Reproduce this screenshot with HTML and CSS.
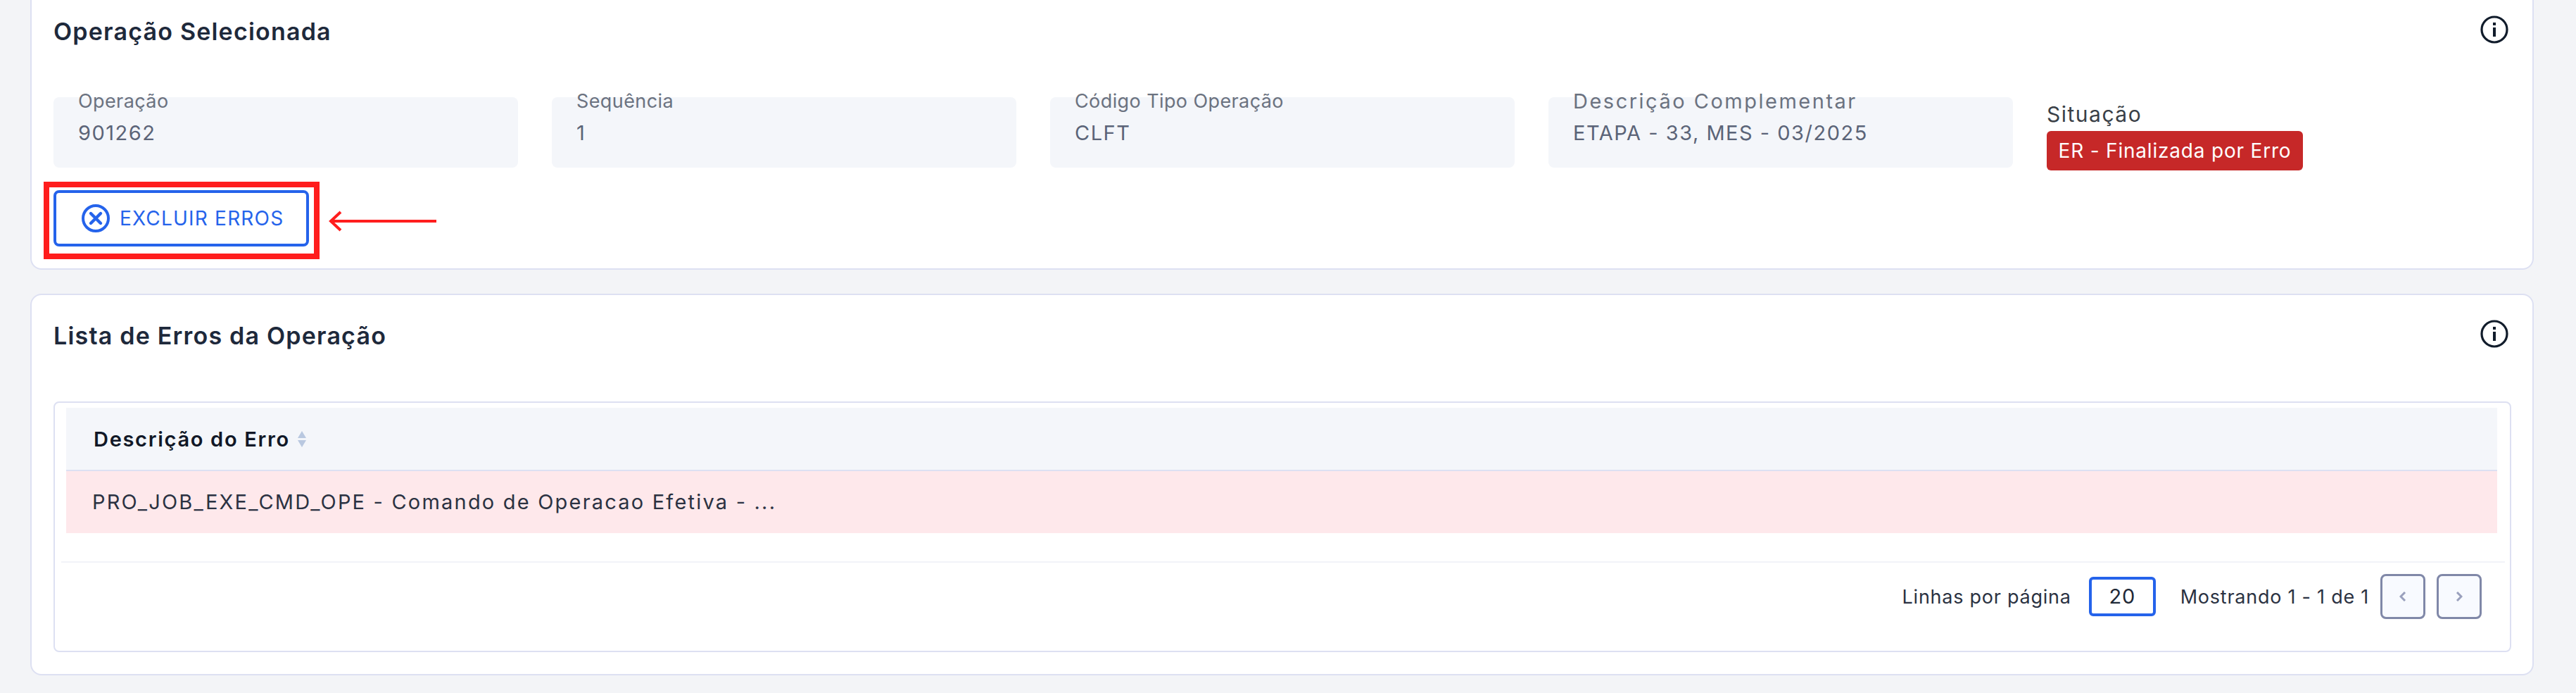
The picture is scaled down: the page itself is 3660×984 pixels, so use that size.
FILE: index.html
```html
<!DOCTYPE html>
<html>
<head>
    <title>Operação Selecionada</title>
    <link rel="stylesheet" href="styles.css">
</head>
<body>
    <div class="page">
        <section class="card">
            <div class="card-head">
                <h2 class="card-title">Operação Selecionada</h2>
                <svg class="info-icon" viewBox="0 0 40 40">
                    <circle cx="20" cy="20" r="18" fill="none" stroke="#111c2b" stroke-width="3.2"/>
                    <rect x="18" y="10" width="4" height="4" fill="#111c2b"/>
                    <rect x="18" y="17" width="4" height="13" fill="#111c2b"/>
                </svg>
            </div>

            <div class="fields">
                <div class="field">
                    <span class="field-label">Operação</span>
                    <span class="field-value">901262</span>
                </div>
                <div class="field">
                    <span class="field-label">Sequência</span>
                    <span class="field-value">1</span>
                </div>
                <div class="field">
                    <span class="field-label">Código Tipo Operação</span>
                    <span class="field-value">CLFT</span>
                </div>
                <div class="field">
                    <span class="field-label label-wide">Descrição Complementar</span>
                    <span class="field-value">ETAPA - 33, MES - 03/2025</span>
                </div>
                <div class="status">
                    <span class="status-label">Situação</span>
                    <span class="badge">ER - Finalizada por Erro</span>
                </div>
            </div>

            <div class="actions">
                <button class="btn-outline">
                    <svg class="btn-icon" viewBox="0 0 40 40">
                        <circle cx="20" cy="20" r="18" fill="none" stroke="currentColor" stroke-width="4"/>
                        <path d="M13 13 L27 27 M27 13 L13 27" fill="none" stroke="currentColor" stroke-width="4.4" stroke-linecap="round"/>
                    </svg>
                    EXCLUIR ERROS
                </button>
                <div class="mark-box"></div>
                <svg class="mark-arrow" viewBox="0 0 156 32">
                    <path d="M154 16 H4 M18 3 L4 16 L18 29" fill="none" stroke="#ff1d1d" stroke-width="4"/>
                </svg>
            </div>
        </section>

        <section class="card">
            <div class="card-head">
                <h2 class="card-title">Lista de Erros da Operação</h2>
                <svg class="info-icon" viewBox="0 0 40 40">
                    <circle cx="20" cy="20" r="18" fill="none" stroke="#111c2b" stroke-width="3.2"/>
                    <rect x="18" y="10" width="4" height="4" fill="#111c2b"/>
                    <rect x="18" y="17" width="4" height="13" fill="#111c2b"/>
                </svg>
            </div>

            <div class="table-box">
                <div class="table-head">
                    Descrição do Erro
                    <svg class="sort-icon" viewBox="0 0 12 23">
                        <path d="M6 0 L12 10 H0 Z M0 13 H12 L6 23 Z" fill="#b9c8e0"/>
                    </svg>
                </div>
                <div class="table-row">PRO_JOB_EXE_CMD_OPE - Comando de Operacao Efetiva - ...</div>

                <div class="table-foot">
                    <span>Linhas por página</span>
                    <span class="page-size">20</span>
                    <span class="page-info">Mostrando 1 - 1 de 1</span>
                    <button class="page-btn">
                        <svg class="chevron" viewBox="0 0 10 14"><path d="M8 1 L2 7 L8 13" fill="none" stroke="#9aa0bd" stroke-width="3"/></svg>
                    </button>
                    <button class="page-btn">
                        <svg class="chevron" viewBox="0 0 10 14"><path d="M2 1 L8 7 L2 13" fill="none" stroke="#9aa0bd" stroke-width="3"/></svg>
                    </button>
                </div>
            </div>
        </section>
    </div>
</body>
</html>
```

FILE: styles.css
```css
html, body { margin: 0; height: 100%; overflow: hidden; }
body {
    background: #f3f4f7;
    font-family: Inter, Arial, sans-serif;
    color: #1f2937;
}
.page {
    margin-top: -15px;
    padding: 0 60px 0 43px;
    display: flex;
    flex-direction: column;
    gap: 34px;
}
.card {
    background: #fff;
    border: 2px solid #dde0f2;
    border-radius: 16px;
    padding: 35px 30px 31px 31px;
}
.card-head {
    display: flex;
    justify-content: space-between;
    align-items: flex-start;
    height: 40px;
    padding-right: 4px;
    margin-bottom: 76px;
}
.card-title {
    margin: 0;
    padding-top: 3px;
    font-size: 34px;
    letter-spacing: 1.2px;
    line-height: 40px;
    font-weight: 600;
    color: #1e293b;
}
.info-icon { width: 40px; height: 40px; }

.fields {
    display: grid;
    grid-template-columns: repeat(5, 660px);
    grid-auto-rows: 100px;
    gap: 48px;
}
.field {
    background: #f4f6fa;
    border-radius: 8px;
    padding: 0 35px;
    display: flex;
    flex-direction: column;
}
.field-label {
    margin-top: -12px;
    font-size: 27px;
    letter-spacing: 0.4px;
    line-height: 36px;
    color: #6b7280;
}
.label-wide { font-size: 29px; letter-spacing: 2.5px; }
.field-value {
    margin-top: 7px;
    font-size: 29px;
    letter-spacing: 1.5px;
    line-height: 40px;
    color: #5b6478;
}
.status { display: flex; flex-direction: column; align-items: flex-start; }
.status-label {
    font-size: 30px;
    letter-spacing: 1.5px;
    line-height: 48px;
    color: #3a3f47;
}
.badge {
    width: 364px;
    height: 56px;
    flex: none;
    background: #c62828;
    border-radius: 6px;
    color: #fff;
    font-size: 28px;
    letter-spacing: 0.8px;
    line-height: 56px;
    text-align: center;
    white-space: nowrap;
}

.actions { position: relative; width: 363px; margin-top: 32px; }
.btn-outline {
    width: 363px;
    height: 80px;
    background: #fff;
    border: 4px solid #2563eb;
    border-radius: 8px;
    color: #2563eb;
    font-family: Inter, Arial, sans-serif;
    font-size: 28px;
    letter-spacing: 1.2px;
    display: flex;
    align-items: center;
    padding: 0 0 0 36px;
    gap: 14px;
    box-sizing: border-box;
}
.btn-icon { width: 40px; height: 40px; }
.mark-box {
    position: absolute;
    top: -12px;
    left: -14px;
    right: -15px;
    bottom: -18px;
    border: 8px solid #ff1d1d;
}
.mark-arrow {
    position: absolute;
    left: 390px;
    top: 28px;
    width: 156px;
    height: 32px;
}

.table-box {
    border: 2px solid #dde0f2;
    border-radius: 8px;
    padding: 7px 0 0 0;
    height: 356px;
    box-sizing: border-box;
}
.table-head {
    margin: 0 18px 0 16px;
    height: 90px;
    box-sizing: border-box;
    background: #f4f6fa;
    border-bottom: 2px solid #dde0f2;
    padding-left: 39px;
    display: flex;
    align-items: center;
    gap: 11px;
    font-size: 29px;
    letter-spacing: 1.7px;
    font-weight: 600;
    color: #111827;
}
.sort-icon { width: 12px; height: 23px; }
.table-row {
    margin: 0 18px 0 16px;
    height: 88px;
    line-height: 88px;
    background: #fee8eb;
    padding-left: 37px;
    font-size: 29px;
    letter-spacing: 2.2px;
    color: #2b3242;
}
.table-foot {
    margin: 40px 7px 0 9px;
    border-top: 2px solid #f2f3f8;
    padding: 16px 33px 0 0;
    display: flex;
    justify-content: flex-end;
    align-items: center;
    font-size: 27px;
    letter-spacing: 0.75px;
    color: #2b3242;
}
.page-size {
    width: 95px;
    height: 56px;
    box-sizing: border-box;
    border: 4px solid #2563eb;
    border-radius: 6px;
    margin: 0 35px 0 25px;
    text-align: center;
    line-height: 48px;
    font-size: 29px;
    color: #1f2937;
}
.page-info { margin-right: 16px; }
.page-btn {
    width: 64px;
    height: 64px;
    padding: 0;
    background: #f8faff;
    border: 3px solid #8088a8;
    border-radius: 8px;
    display: flex;
    align-items: center;
    justify-content: center;
}
.page-btn + .page-btn { margin-left: 16px; }
.chevron { width: 10px; height: 14px; }
```
